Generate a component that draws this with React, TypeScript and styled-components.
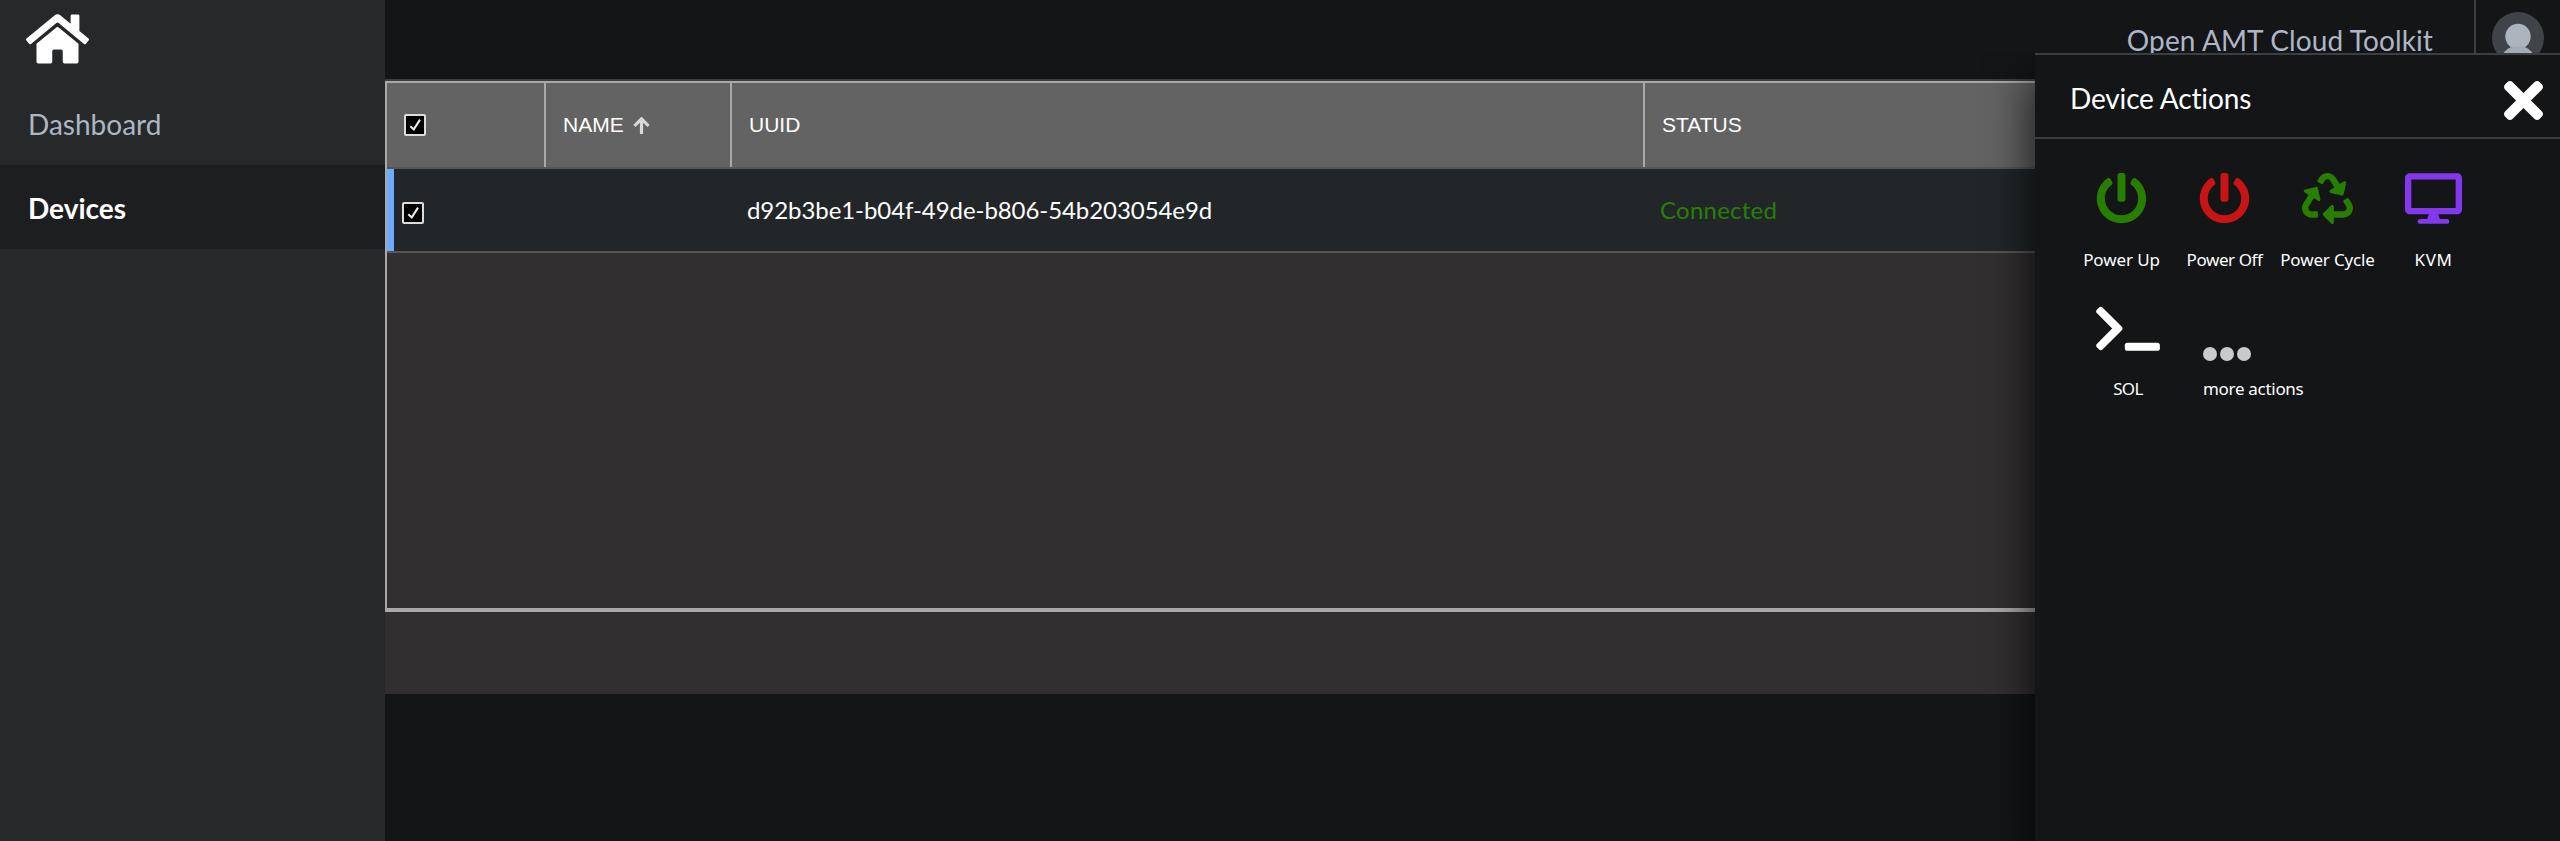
import React from "react";
import styled, { createGlobalStyle } from "styled-components";
import { FaDesktop, FaHome, FaPowerOff, FaRecycle, FaTerminal, FaTimes } from "react-icons/fa";

const GlobalStyle = createGlobalStyle`
  * { box-sizing: border-box; }
  body { margin: 0; background: #131517; font-family: Lato, "Noto Sans", sans-serif; color: #fff; }
`;

const Page = styled.div`
  display: flex;
  height: 841px;
  overflow: hidden;
  position: relative;
`;

const Sidebar = styled.nav`
  width: 385px;
  flex: none;
  background: #262829;
`;

const HomeLink = styled.div`
  height: 81px;
  padding: 11px 0 0 26px;
  svg { display: block; width: 63px; height: 56px; }
`;

const NavItem = styled.a<{ $active?: boolean }>`
  display: block;
  height: 84px;
  line-height: 86px;
  padding-left: 28px;
  font-size: 28px;
  font-weight: ${(p) => (p.$active ? 700 : 400)};
  color: ${(p) => (p.$active ? "#fff" : "#aeb6c5")};
  background: ${(p) => (p.$active ? "#1d1e20" : "transparent")};
`;

const Main = styled.main`
  flex: 1;
  min-width: 0;
`;

const TopBar = styled.header`
  height: 81px;
  display: flex;
  justify-content: flex-end;
  border-bottom: 2px solid #3d3e40;
`;

const Brand = styled.div`
  padding-right: 41px;
  font-size: 28px;
  line-height: 80px;
  letter-spacing: 0.12px;
  color: #aeb6c5;
`;

const UserArea = styled.div`
  width: 86px;
  height: 79px;
  padding: 12px 0 0 16px;
  border-left: 2px solid #3d3e40;
  svg { display: block; }
`;

const Content = styled.section`
  height: 613px;
  background: #322f30;
`;

const Table = styled.div`
  height: 531px;
  border: 2px solid #a9a9a9;
  border-bottom-width: 4px;
`;

const columns = "159px 186px 913px 1fr";

const HeadRow = styled.div`
  display: grid;
  grid-template-columns: ${columns};
  height: 86px;
  background: #636363;
  border-bottom: 2px solid #565656;
`;

const HeadCell = styled.div`
  display: flex;
  align-items: center;
  gap: 9px;
  padding: 0 0 0 17px;
  border-right: 2px solid #a9a9a9;
  font: 21px "Liberation Sans", Arial, sans-serif;
`;

const DataRow = styled.div`
  display: grid;
  grid-template-columns: ${columns};
  height: 84px;
  background: #222628;
  border-bottom: 2px solid #565656;
`;

const DataCell = styled.div<{ $color?: string; $spacing?: number }>`
  padding-left: 15px;
  font-size: 24px;
  line-height: 82px;
  letter-spacing: ${(p) => p.$spacing ?? 0}px;
  color: ${(p) => p.$color ?? "#fff"};
`;

const SelectCell = styled.div`
  display: flex;
  align-items: center;
  padding: 6px 0 0 8px;
  border-left: 7px solid #6eaaff;
`;

const Drawer = styled.aside`
  position: absolute;
  top: 53px;
  right: 0;
  width: 525px;
  height: 788px;
  background: #131517;
  border-top: 2px solid #3d3e40;
  box-shadow: 0 22px 44px 2px rgba(0, 0, 0, 0.78);
  clip-path: inset(0 0 0 -60px);
`;

const DrawerHeader = styled.div`
  display: flex;
  justify-content: space-between;
  align-items: center;
  height: 84px;
  padding: 8px 17px 0 35px;
  border-bottom: 2px solid #3d3e40;
  svg { width: 39px; height: 57px; }
`;

const DrawerTitle = styled.h2`
  margin: 0;
  font-size: 28px;
  font-weight: 400;
  line-height: 34px;
  letter-spacing: -0.15px;
  padding-bottom: 5px;
`;

const Actions = styled.div<{ $inset: number }>`
  display: flex;
  height: 131px;
  padding-left: ${(p) => p.$inset}px;
`;

const Action = styled.button<{ $width: number; $compact?: boolean }>`
  display: flex;
  flex-direction: column;
  align-items: center;
  gap: ${(p) => (p.$compact ? 23 : 24)}px;
  width: ${(p) => p.$width}px;
  padding: ${(p) => (p.$compact ? 33 : 34)}px 0 0;
  border: 0;
  background: none;
`;

const MoreAction = styled(Action)`
  align-items: flex-start;
  padding-left: 43px;
`;

const ActionIcon = styled.span<{ $color: string; $width: number }>`
  height: 51px;
  color: ${(p) => p.$color};
  svg { display: block; width: ${(p) => p.$width}px; height: 51px; }
`;

const ActionLabel = styled.span<{ $spacing?: number }>`
  font: 17px/24px "Noto Sans", sans-serif;
  letter-spacing: ${(p) => p.$spacing ?? 0}px;
  white-space: nowrap;
  color: #fff;
`;

const CheckBox = () => (
  <svg width="22" height="22" viewBox="0 0 22 22">
    <rect x="1" y="1" width="20" height="20" rx="1" fill="#000" stroke="#dcdcdc" strokeWidth="2" />
    <path d="M6.3 12.2 9.8 15.4 16 5.6" fill="none" stroke="#eee" strokeWidth="2" />
  </svg>
);

const SortArrow = () => (
  <svg width="17" height="17" viewBox="0 0 17 17">
    <path d="M8.5 17V2M1.4 9 8.5 1.8 15.6 9" fill="none" stroke="#d9d9d9" strokeWidth="3.2" />
  </svg>
);

const Avatar = () => (
  <svg width="52" height="52" viewBox="0 0 52 52">
    <circle cx="26" cy="26" r="26" fill="#404348" />
    <circle cx="26" cy="24.5" r="12.7" fill="#acb4be" />
    <path d="M20 34.5C15 37 12 39 10 44.5A24 24 0 0 0 42 44.5C40 39 37 37 32 34.5Z" fill="#a3abb5" />
  </svg>
);

const Dots = () => (
  <svg viewBox="0 0 48 51" overflow="visible">
    {[7, 24, 41].map((cx) => (
      <circle key={cx} cx={cx} cy="51" r="7" fill="#cacaca" />
    ))}
  </svg>
);

export default function App() {
  return (
    <Page>
      <GlobalStyle />
      <Sidebar>
        <HomeLink><FaHome preserveAspectRatio="none" /></HomeLink>
        <NavItem>Dashboard</NavItem>
        <NavItem $active>Devices</NavItem>
      </Sidebar>
      <Main>
        <TopBar>
          <Brand>Open AMT Cloud Toolkit</Brand>
          <UserArea><Avatar /></UserArea>
        </TopBar>
        <Content>
          <Table>
            <HeadRow>
              <HeadCell><CheckBox /></HeadCell>
              <HeadCell>NAME<SortArrow /></HeadCell>
              <HeadCell>UUID</HeadCell>
              <HeadCell>STATUS</HeadCell>
            </HeadRow>
            <DataRow>
              <SelectCell><CheckBox /></SelectCell>
              <DataCell />
              <DataCell $spacing={-0.07}>d92b3be1-b04f-49de-b806-54b203054e9d</DataCell>
              <DataCell $color="#267f08" $spacing={0.25}>Connected</DataCell>
            </DataRow>
          </Table>
        </Content>
      </Main>
      <Drawer>
        <DrawerHeader>
          <DrawerTitle>Device Actions</DrawerTitle>
          <FaTimes />
        </DrawerHeader>
        <Actions $inset={35}>
          <Action $width={103}>
            <ActionIcon $color="#267f00" $width={51}><FaPowerOff /></ActionIcon>
            <ActionLabel $spacing={-0.1}>Power Up</ActionLabel>
          </Action>
          <Action $width={103}>
            <ActionIcon $color="#c81414" $width={51}><FaPowerOff /></ActionIcon>
            <ActionLabel $spacing={-0.4}>Power Off</ActionLabel>
          </Action>
          <Action $width={103}>
            <ActionIcon $color="#267f00" $width={51}><FaRecycle /></ActionIcon>
            <ActionLabel $spacing={-0.15}>Power Cycle</ActionLabel>
          </Action>
          <Action $width={109}>
            <ActionIcon $color="#8338ec" $width={57}><FaDesktop /></ActionIcon>
            <ActionLabel $spacing={0.6}>KVM</ActionLabel>
          </Action>
        </Actions>
        <Actions $inset={61}>
          <Action $width={64} $compact>
            <ActionIcon $color="#fff" $width={64}><FaTerminal /></ActionIcon>
            <ActionLabel $spacing={-0.6}>SOL</ActionLabel>
          </Action>
          <MoreAction $width={143} $compact>
            <ActionIcon $color="#cacaca" $width={48}><Dots /></ActionIcon>
            <ActionLabel $spacing={-0.3}>more actions</ActionLabel>
          </MoreAction>
        </Actions>
      </Drawer>
    </Page>
  );
}
